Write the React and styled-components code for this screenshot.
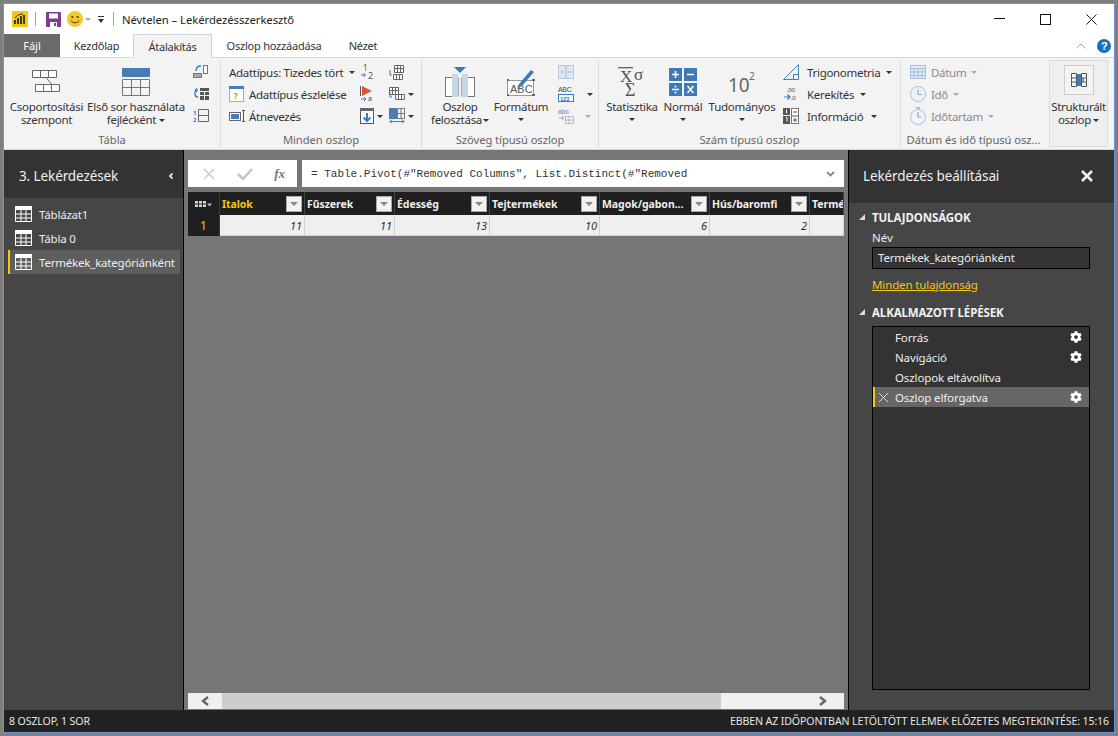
import React from 'react';
import styled, { createGlobalStyle } from 'styled-components';
import { FaCog } from 'react-icons/fa';

const Global = createGlobalStyle`
  html, body { margin: 0; padding: 0; width: 1118px; height: 736px; overflow: hidden; background: #7f7f7f; }
  * { box-sizing: border-box; }
  body { font-family: "Noto Sans", "Open Sans", sans-serif; }
`;

const Screen = styled.div`
  width: 1118px; height: 736px; padding: 3px 3px 3px 3px; background: #7f7f7f;
`;
const Win = styled.div`
  width: 1112px; height: 730px; border: 1px solid #6d94d0; background: #fff;
  display: flex; flex-direction: column; overflow: hidden;
`;
const TitleBar = styled.div`
  height: 30px; display: flex; align-items: center; padding-left: 8px; background: #fff; flex: none;
`;
const Sep = styled.span`
  width: 1px; height: 14px; background: #a0a0a0; margin: 0 ${p => p.$r || 10}px 0 ${p => p.$l || 6}px;
`;
const Qat = styled.span`
  display: inline-flex; align-items: center; margin-left: ${p => p.$ml || 0}px;
`;
const WinTitle = styled.span`
  font-size: 11.3px; color: #222; white-space: nowrap; letter-spacing: -0.06px;
`;
const WinControls = styled.div`
  margin-left: auto; display: flex; align-items: center;
`;
const WinBtn = styled.span`
  width: 46px; display: flex; justify-content: center; align-items: center;
`;
const TabRow = styled.div`
  height: 23px; display: flex; align-items: flex-end; flex: none; background: #fff; position: relative;
`;
const FileTab = styled.div`
  width: 56px; height: 23px; background: #6a6a6a; color: #fff; font-size: 11px;
  display: flex; align-items: center; justify-content: center;
`;
const Tab = styled.div`
  height: ${p => p.$active ? 24 : 23}px; width: ${p => p.$w}px; margin-left: ${p => p.$ml || 0}px;
  display: flex; align-items: center; justify-content: center;
  font-size: 11px; color: #333; white-space: nowrap; letter-spacing: -0.22px;
  ${p => p.$active ? `background:#f3f3f3;border:1px solid #d2d2d2;border-bottom:none;margin-bottom:-1px;z-index:1;` : ''}
`;
const TabEnd = styled.div`
  margin-left: auto; display: flex; align-items: center; height: 23px; gap: 11px; padding-right: 3px;
`;
const Ribbon = styled.div`
  height: 93px; background: #f3f3f3; border-top: 1px solid #d8d8d8; border-bottom: 1px solid #d6d6d6; display: flex; flex: none;
`;
const Group = styled.div`
  width: ${p => p.$w}px; flex: none; display: flex; flex-direction: column; position: relative;
  border-right: ${p => p.$last ? 'none' : '1px solid #dcdcdc'};
  margin: 2px 0 1px;
`;
const GroupBody = styled.div`
  flex: 1; display: flex; padding-left: ${p => p.$pl || 0}px; padding-top: 1px; min-height: 0;
`;
const GroupLabel = styled.div`
  height: 17px; line-height: 17px; text-align: center; font-size: 11.2px; color: #666; white-space: nowrap;
  letter-spacing: -0.05px;
`;
const Large = styled.div`
  width: ${p => p.$w}px; flex: none; display: flex; flex-direction: column; align-items: center; color: #333;
`;
const LargeIcon = styled.div`
  height: 39px; display: flex; align-items: center; justify-content: center; padding-top: 2px;
`;
const LargeText = styled.div`
  font-size: 11.5px; line-height: 13px; text-align: center; white-space: nowrap; letter-spacing: -0.28px;
`;
const Caret = styled.span`
  display: inline-block; width: 0; height: 0; vertical-align: middle;
  margin-left: ${p => p.$ml ?? 3}px;
  border-left: 3px solid transparent; border-right: 3px solid transparent;
  border-top: 3px solid ${p => p.$off ? '#aaa' : '#333'};
`;
const CaretLine = styled.div`
  height: 13px; display: flex; justify-content: center; align-items: center;
`;
const Col = styled.div`
  width: ${p => p.$w}px; flex: none; display: flex; flex-direction: column;
`;
const SmallRow = styled.div`
  height: 22px; display: flex; align-items: center; white-space: nowrap; font-size: 11.5px;
  color: ${p => p.$off ? '#8a8a8a' : '#333'}; letter-spacing: -0.3px;
`;
const RowIcon = styled.span`
  width: ${p => p.$w || 20}px; flex: none; display: inline-flex; align-items: center; margin-left: ${p => p.$ml || 0}px;
`;
const BoxedGroup = styled.div`
  width: 59px; flex: none; margin: 2px 0 2px 3px; background: #efefef; border: 1px solid #dcdcdc;
  display: flex; flex-direction: column; align-items: center; padding-top: 4px; color: #333;
`;
const BoxIcon = styled.div`
  width: 30px; height: 30px; border: 1px solid #cfcfcf; background: #f3f3f3; display: flex; align-items: center; justify-content: center;
  margin-bottom: 5px;
`;
const Main = styled.div`
  flex: 1; display: flex; min-height: 0; background: #767676;
`;
const LeftPane = styled.div`
  width: 180px; flex: none; border-right: 1px solid #000; background: #464646; display: flex; flex-direction: column;
`;
const PaneHead = styled.div`
  height: ${p => p.$h}px; background: #333; display: flex; align-items: center; justify-content: space-between;
  color: #f0f0f0; flex: none; font-size: ${p => p.$fs}px; padding: ${p => p.$pt}px ${p => p.$pr}px ${p => p.$pb}px ${p => p.$pl}px; letter-spacing: -0.1px;
`;
const QueryList = styled.div`
  padding: 4px 3px 0 4px; display: flex; flex-direction: column;
`;
const QueryRow = styled.div`
  height: 24px; display: flex; align-items: center; gap: 7px; padding-left: ${p => p.$sel ? 5 : 7}px; color: #eee; font-size: 11.5px; letter-spacing: -0.2px;
  ${p => p.$sel ? 'background:#5e5e5e;border-left:2px solid #f2c811;' : ''}
`;
const Center = styled.div`
  flex: 1; min-width: 0; display: flex; flex-direction: column; padding: 10px 4px 1px 4px; background: #767676;
`;
const FormulaBar = styled.div`
  height: 27px; display: flex; gap: 5px; flex: none;
`;
const FxBox = styled.div`
  width: 109px; background: #fff; display: flex; align-items: center; justify-content: space-between; padding: 0 12px 0 15px;
`;
const FxText = styled.span`
  font-family: "Liberation Serif", serif; font-style: italic; font-weight: 700; font-size: 13px; color: #777;
`;
const FormulaBox = styled.div`
  flex: 1; background: #fff; display: flex; align-items: center; justify-content: space-between; padding: 0 9px 0 9px;
  font-family: "Liberation Mono", monospace; font-size: 11px; color: #333; white-space: pre;
`;
const Table = styled.div`
  margin-top: 5px; overflow: hidden; flex: none;
`;
const TRow = styled.div`
  display: flex; height: ${p => p.$h}px;
`;
const RowNum = styled.div`
  width: 32px; flex: none; background: #1f1f1f; color: ${p => p.$num ? '#f2c811' : '#ccc'}; font-size: 12px; display: flex; align-items: center; justify-content: center;
  border-right: 1px solid #3a3a3a;
`;
const Th = styled.div`
  width: ${p => p.$w}px; flex: none; background: #1f1f1f; border-right: 1px solid #444;
  display: flex; align-items: center; justify-content: space-between; padding: 0 2px 0 2px;
  color: ${p => p.$first ? '#f2c811' : '#eee'}; font-weight: 700; font-size: 10.5px; white-space: nowrap; letter-spacing: -0.05px;
  overflow: hidden;
`;
const FilterBtn = styled.span`
  width: 16px; height: 16px; flex: none; background: #f2f2f2; border: 1px solid #aaa; display: flex; align-items: center; justify-content: center;
`;
const Td = styled.div`
  width: ${p => p.$w}px; flex: none; background: #efefef; border-right: 1px solid #d0d0d0; border-bottom: 1px solid #d0d0d0;
  color: #333; font-style: italic; font-size: 11px; text-align: right; padding: 3px 2px 0 0; line-height: 15px;
`;
const Spacer = styled.div` flex: 1; `;
const ScrollBar = styled.div`
  height: 16px; display: flex; align-items: center; background: #f0f0f0; flex: none;
`;
const ScrollBtn = styled.div`
  width: ${p => p.$w}px; flex: none; display: flex; justify-content: center; align-items: center;
`;
const Thumb = styled.div`
  width: 499px; height: 16px; background: #cdcdcd; flex: none;
`;
const RightPane = styled.div`
  width: 266px; flex: none; border-left: 1px solid #000; background: #464646; display: flex; flex-direction: column;
`;
const Section = styled.div`
  padding: 0 24px 0 23px; color: #eee;
`;
const SectionHead = styled.div`
  height: 18px; display: flex; align-items: center; font-weight: 700; font-size: 11.5px; color: #f0f0f0; letter-spacing: -0.12px; margin-top: ${p => p.$mt}px;
`;
const Tri = styled.span`
  width: 0; height: 0; margin-left: -13px; margin-right: 7px;
  border-style: solid; border-width: 0 0 6px 6px; border-color: transparent transparent #ddd transparent;
`;
const NameLabel = styled.div`
  font-size: 11.5px; height: 16px; line-height: 16px; margin-top: 4px;
`;
const NameInput = styled.div`
  height: 22px; margin-top: 1px; background: #333; border: 1px solid #000; color: #eee; font-size: 11.5px; padding-left: 5px; line-height: 20px; letter-spacing: -0.16px;
`;
const Link = styled.a`
  display: inline-block; margin-top: 8px; font-size: 11.5px; color: #f2c811; text-decoration: underline; letter-spacing: -0.12px; line-height: 16px;
`;
const Steps = styled.div`
  height: 364px; margin-top: 5px; background: #333; border: 1px solid #000;
`;
const Step = styled.div`
  height: 20px; display: flex; align-items: center; font-size: 11.5px; color: #eee; letter-spacing: -0.12px; padding: 0 7px 0 ${p => p.$sel ? 3 : 22}px;
  ${p => p.$sel ? 'background:#666;border-left:2px solid #f2c811;' : ''}
`;
const StepX = styled.span`
  width: 17px; display: inline-flex; flex: none;
`;
const StepGear = styled.span`
  margin-left: auto; display: inline-flex;
`;
const StatusBar = styled.div`
  height: 22px; flex: none; background: #212121; color: #e6e6e6; font-size: 10.6px; display: flex; align-items: center; justify-content: space-between; padding: 0 5px 0 5px; letter-spacing: -0.12px;
`;

const W = ({ w, h, children }) => <svg width={w} height={h} viewBox={`0 0 ${w} ${h}`} fill="none" style={{ display: 'block', flex: 'none', overflow: 'visible' }}>{children}</svg>;

const Logo = () => <W w={16} h={16}><rect width="16" height="16" fill="#f2c811" /><path d="M2 9v4h2V9zM5 7v6h2V7zM8 5v8h2V5zM11 4v9h2V4z" fill="#3a3a3a" /><path d="M3 7c2-3 5-4 8-4" stroke="#3a3a3a" /></W>;
const Save = () => <W w={15} h={15}><rect width="15" height="15" rx="1" fill="#7b3d93" /><rect x="3" y="1.5" width="9" height="5" fill="#fff" /><rect x="4" y="10" width="7" height="5" fill="#fff" /><rect x="8" y="11" width="2" height="3" fill="#7b3d93" /></W>;
const Smile = () => <W w={16} h={16}><circle cx="8" cy="8" r="8" fill="#f4c72b" /><circle cx="5.3" cy="6" r="1.1" fill="#3a3a3a" /><circle cx="10.7" cy="6" r="1.1" fill="#3a3a3a" /><path d="M4 9.5c1.5 3 6.5 3 8 0" stroke="#3a3a3a" /></W>;
const QatMenu = () => <W w={8} h={9}><path d="M1 1.5h6" stroke="#333" /><path d="M1 4l3 4 3-4z" fill="#333" /></W>;
const GroupBy = () => <W w={30} h={24}><g stroke="#666" fill="#fff"><path d="M.5.5h8v7h-8zM8.5.5h8v7h-8zM16.5.5h8v7h-8zM3.5 14.5h8v7h-8zM11.5 14.5h8v7h-8zM19.5 14.5h8v7h-8z" /><path d="M14 7.5l6 7" /></g></W>;
const FirstRow = () => <W w={28} h={28}><rect width="28" height="9" fill="#4a7db5" /><g stroke="#777"><path d="M.5 11.5h27v16H.5zM.5 19.5h27M9.5 11.5v16M18.5 11.5v16" /></g></W>;
const Sm1 = () => <W w={16} h={14}><rect x="10.5" y=".5" width="4" height="8" fill="#fff" stroke="#777" /><rect x=".5" y="8.5" width="8" height="4" fill="#aaa" stroke="#777" /><path d="M3 6c0-3 2-5 5-5" stroke="#2f7cc4" strokeWidth="1.4" /></W>;
const Sm2 = () => <W w={16} h={14}><path d="M7 1h9v3H7zM7 5h4v3H7zM12 5h4v3h-4zM7 9h4v4H7zM12 9h4v4h-4z" fill="#555" /><path d="M5 3C1 3 1 10 5 10" stroke="#2f7cc4" strokeWidth="1.4" /><path d="M4 1l-2 2 2 2" stroke="#2f7cc4" /></W>;
const Sm3 = () => <W w={16} h={14}><path d="M5.5.5h10v12h-10zM5.5 6.5h10" stroke="#666" /><text x="0" y="6" fontSize="6" fill="#2f7cc4" fontWeight="700">1</text><text x="0" y="13" fontSize="6" fill="#2f7cc4" fontWeight="700">2</text></W>;
const Detect = () => <W w={15} h={16}><rect x=".5" y=".5" width="14" height="15" fill="#fff" stroke="#aaa" /><rect width="15" height="3" fill="#4a7db5" /><text x="4.5" y="13" fontSize="9" fill="#c79a2a" fontWeight="700">?</text></W>;
const Rename = () => <W w={17} h={14}><rect x=".5" y="3.5" width="11" height="8" fill="#fff" stroke="#666" /><rect x="2" y="5" width="8" height="5" fill="#4a7db5" /><path d="M13 1.5h3M14.5 1.5v11M13 12.5h3" stroke="#555" /></W>;
const Num12 = () => <W w={16} h={16}><text x="3" y="7" fontSize="8" fill="#555">1</text><text x="8" y="15" fontSize="9" fill="#555">2</text><path d="M1 11h4M3.5 9l2 2-2 2" stroke="#2f7cc4" /></W>;
const Flag = () => <W w={17} h={16}><path d="M.5 0v10" stroke="#555" /><path d="M2 0l10 5-10 5z" fill="#d9513b" /><text x="8" y="15" fontSize="7" fill="#444">a</text><path d="M1 13h5M4 11l2 2-2 2" stroke="#2f7cc4" /></W>;
const Fill = () => <W w={14} h={16}><rect x=".5" y=".5" width="13" height="15" fill="#fff" stroke="#555" /><rect width="14" height="3" fill="#666" /><path d="M7 5v8M3.5 9.5L7 13l3.5-3.5" stroke="#2f7cc4" strokeWidth="2" /></W>;
const GridArrow = ({ flip }) => <W w={16} h={15}><g stroke="#666" fill="#fff" transform={flip ? 'translate(0 0)' : 'translate(5 0)'}><path d="M.5.5h9v7h-9zM.5 3.5h9M3.5.5v7M6.5.5v7" /></g><g stroke="#666" fill="#fff" transform={flip ? 'translate(6 7)' : 'translate(4 9)'}><path d="M.5.5h9v5h-9zM3.5.5v5M6.5.5v5" /></g><path d="M1 5v5h2" stroke="#2f7cc4" /></W>;
const Widen = () => <W w={16} h={16}><rect x=".5" y=".5" width="7" height="10" fill="#4a7db5" stroke="#4a7db5" /><path d="M8.5.5h7v10h-7zM12 .5v10M.5 5.5h15M4 .5v10" stroke="#777" /><path d="M1 13.5h14M3 11.5l-2 2 2 2M13 11.5l2 2-2 2" stroke="#2f7cc4" /></W>;
const Split = () => <W w={30} h={30}><path d="M9 0h12l-6 6z" fill="#3f7ab8" /><rect x=".5" y="10.5" width="7" height="19" fill="#fff" stroke="#777" /><rect x="22.500" y="10.5" width="7" height="19" fill="#fff" stroke="#777" /><rect x="7" y="7" width="6" height="23" fill="#c5d8ea" /><rect x="17" y="7" width="6" height="23" fill="#c5d8ea" /><path d="M13.500 10.500v19M16.500 10.500v19" stroke="#aaa" /></W>;
const Format = () => <W w={30} h={30}><rect x="1.5" y="13.5" width="26" height="15" fill="#fff" stroke="#999" /><path d="M1 13h2M26 13h3M1 28h2M26 28h3" stroke="#666" strokeWidth="2" /><text x="4" y="26" fontSize="11" fill="#555" fontFamily="Liberation Sans">ABC</text><path d="M11 22l2-5L25 3l3 2-12 14z" fill="#3f7ab8" /></W>;
const MergeOff = () => <W w={16} h={14}><rect x=".5" y=".5" width="15" height="13" fill="#dfe6ee" stroke="#b6c8dc" /><path d="M3 7h3M13 7h-3M8 1v12" stroke="#9db7d3" /></W>;
const Abc123 = () => <W w={16} h={16}><text x="0" y="6" fontSize="7" fill="#444" fontFamily="Liberation Sans">ABC</text><rect x=".5" y="8.5" width="15" height="7" fill="#fff" stroke="#2f7cc4" /><text x="2" y="14.5" fontSize="6" fontWeight="700" fill="#2f7cc4" fontFamily="Liberation Sans">123</text></W>;
const AbcOff = () => <W w={16} h={16}><text x="0" y="6" fontSize="7" fill="#8ba9c6" fontFamily="Liberation Sans" fontWeight="700">abc</text><path d="M1 10h5M4 8l2 2-2 2" stroke="#8ba9c6" /><path d="M7.5 8.5h8v7h-8zM7.5 12h8M11 8.5v7" stroke="#bbb" /></W>;
const Stats = () => <W w={28} h={30}><path d="M0 .7h15" stroke="#555" strokeWidth="1.2" /><text x="2" y="15" fontSize="17" fill="#555" fontFamily="Liberation Serif">X</text><text x="16" y="13" fontSize="17" fill="#555" fontFamily="Liberation Serif">σ</text><text x="7" y="29" fontSize="18" fill="#555" fontFamily="Liberation Serif">Σ</text></W>;
const Std = () => <W w={28} h={28}><rect width="13" height="13" fill="#3f7ab8" /><rect x="15" width="13" height="13" fill="#3f7ab8" /><rect y="15" width="13" height="13" fill="#3f7ab8" /><rect x="15" y="15" width="13" height="13" fill="#3f7ab8" /><path d="M3 6.5h7M6.5 3v7M18 6.5h7M3 21.5h7M18.5 18l6 7M24.5 18l-6 7" stroke="#fff" strokeWidth="1.6" /><circle cx="6.5" cy="18.5" r="1" fill="#fff" /><circle cx="6.5" cy="24.500" r="1" fill="#fff" /></W>;
const Sci = () => <W w={28} h={24}><text x="0" y="22" fontSize="19" fill="#666" fontFamily="Noto Sans">10</text><text x="21" y="10" fontSize="10" fill="#666" fontFamily="Noto Sans">2</text></W>;
const Trig = () => <W w={16} h={16}><path d="M.5 15.5L15.5 .5v15z" stroke="#4a7db5" /><path d="M10.5 15.5v-5h5" stroke="#4a7db5" /></W>;
const Round = () => <W w={16} h={16}><text x="4" y="6" fontSize="6" fill="#444">.00</text><text x="8" y="14" fontSize="6" fill="#444">.0</text><path d="M1 11h6M4.5 8.500L7 11l-2.500 2.500" stroke="#2f7cc4" strokeWidth="1.2" /></W>;
const Info = () => <W w={16} h={16}><rect width="7" height="7" fill="#555" /><rect y="8" width="7" height="8" fill="#555" /><rect x="8.5" y=".5" width="7" height="15" fill="#fff" stroke="#777" /><path d="M10 4h4M8.500 8h7M12 10v4M10 12h4" stroke="#555" /><path d="M3.500 1.500v4M3 9.500h1v4" stroke="#fff" /></W>;
const DateI = () => <W w={16} h={14}><rect x=".5" y=".5" width="15" height="13" fill="#e3ebf3" stroke="#a9c0dc" /><path d="M.5 3.500h15M4 3.500v10M8 3.500v10M12 3.500v10M.5 7h15M.5 10.500h15" stroke="#a9c0dc" /></W>;
const Clock = () => <W w={16} h={16}><circle cx="8" cy="8" r="7.5" fill="#eef3f8" stroke="#a9c0dc" /><path d="M8 3.500V8.500h4" stroke="#8aa9cc" strokeWidth="1.2" /></W>;
const Timer = () => <W w={16} h={18}><circle cx="8" cy="10" r="7.5" fill="#eef3f8" stroke="#a9c0dc" /><path d="M8 5v5h3.500M6 .8h4" stroke="#8aa9cc" strokeWidth="1.2" /></W>;
const Struct = () => <W w={16} h={14}><path d="M.5.5h5v13h-5zM.5 5h5M.5 9h5M10.500.5h5v13h-5zM10.500 5h5M10.500 9h5" stroke="#555" /><rect x="6" y="1" width="4" height="12" fill="#3f7ab8" /><path d="M7 7h6M11 5l2 2-2 2" stroke="#3f7ab8" /></W>;
const TableIcon = () => <W w={17} h={16}><path d="M.5.5h16v15H.5z" stroke="#fff" /><rect width="17" height="4" fill="#fff" /><path d="M.5 8h16M.5 12h16M6 4v11M11 4v11" stroke="#fff" /></W>;
const XI = ({ s = 12, c = '#bbb', w = 2 }) => <W w={s} h={s}><path d={`M1 1L${s - 1} ${s - 1}M${s - 1} 1L1 ${s - 1}`} stroke={c} strokeWidth={w} /></W>;
const Check = () => <W w={16} h={12}><path d="M1 6l5 5L15 1" stroke="#c4c4c4" strokeWidth="2.5" /></W>;
const Filt = () => <W w={8} h={4}><path d="M0 0h8L4 4z" fill="#888" /></W>;
const GridTiny = () => <W w={17} h={8}><path d="M0 1h11v6H0z" fill="#cbd8ea" /><path d="M3.500 1v6M7.500 1v6M0 4h11" stroke="#222" /><path d="M12 3.500h5l-2.500 3z" fill="#bbb" /></W>;
const Chev = ({ d, c = '#666', s = 2.4 }) => <W w={11} h={12}><path d={d} stroke={c} strokeWidth={s} /></W>;

const cols = [
  { w: 85, t: 'Italok', v: '11', first: true },
  { w: 90, t: 'Fűszerek', v: '11' },
  { w: 95, t: 'Édesség', v: '13' },
  { w: 110, t: 'Tejtermékek', v: '10' },
  { w: 110, t: 'Magok/gabon...', v: '6' },
  { w: 100, t: 'Hús/baromfi', v: '2' },
  { w: 34, t: 'Termékek', v: '', clip: true },
];

export default function App() {
  return (
    <Screen>
      <Global />
      <Win>
        <TitleBar>
          <Logo />
          <Sep $l={7} $r={10} />
          <Save />
          <Qat $ml={6}><Smile /></Qat>
          <Caret $ml={2} $off />
          <Qat $ml={6}><QatMenu /></Qat>
          <Sep $l={8} $r={8} />
          <WinTitle>Névtelen – Lekérdezésszerkesztő</WinTitle>
          <WinControls>
            <WinBtn><W w={11} h={2}><path d="M0 .5h11" stroke="#111" /></W></WinBtn>
            <WinBtn><W w={11} h={11}><rect x=".5" y=".5" width="10" height="10" stroke="#111" /></W></WinBtn>
            <WinBtn><W w={11} h={11}><path d="M.5.5l10 10M10.500.5l-10 10" stroke="#111" /></W></WinBtn>
          </WinControls>
        </TitleBar>
        <TabRow>
          <FileTab>Fájl</FileTab>
          <Tab $w={73}>Kezdőlap</Tab>
          <Tab $w={79} $active>Átalakítás</Tab>
          <Tab $w={124}>Oszlop hozzáadása</Tab>
          <Tab $w={54}>Nézet</Tab>
          <TabEnd>
            <W w={10} h={6}><path d="M.5 5.500L5 1l4.500 4.500" stroke="#aaa" /></W>
            <W w={14} h={14}><circle cx="7" cy="7" r="7" fill="#1470c4" /><text x="4" y="11" fontSize="11" fontWeight="700" fill="#fff" fontFamily="Liberation Sans">?</text></W>
          </TabEnd>
        </TabRow>
        <Ribbon>
          <Group $w={217}>
            <GroupBody $pl={3}>
              <Large $w={79}>
                <LargeIcon><GroupBy /></LargeIcon>
                <LargeText>Csoportosítási<br />szempont</LargeText>
              </Large>
              <Large $w={100}>
                <LargeIcon><FirstRow /></LargeIcon>
                <LargeText>Első sor használata<br />fejlécként<Caret /></LargeText>
              </Large>
              <Col $w={26}>
                <SmallRow><RowIcon $w={16} $ml={7}><Sm1 /></RowIcon></SmallRow>
                <SmallRow><RowIcon $w={16} $ml={7}><Sm2 /></RowIcon></SmallRow>
                <SmallRow><RowIcon $w={16} $ml={7}><Sm3 /></RowIcon></SmallRow>
              </Col>
            </GroupBody>
            <GroupLabel>Tábla</GroupLabel>
          </Group>
          <Group $w={201}>
            <GroupBody $pl={8}>
              <Col $w={131}>
                <SmallRow>Adattípus: Tizedes tört<Caret $ml={6} /></SmallRow>
                <SmallRow><RowIcon><Detect /></RowIcon>Adattípus észlelése</SmallRow>
                <SmallRow><RowIcon><Rename /></RowIcon>Átnevezés</SmallRow>
              </Col>
              <Col $w={29}>
                <SmallRow><Num12 /></SmallRow>
                <SmallRow><Flag /></SmallRow>
                <SmallRow><Fill /><Caret /></SmallRow>
              </Col>
              <Col $w={30}>
                <SmallRow><GridArrow /></SmallRow>
                <SmallRow><GridArrow flip /><Caret /></SmallRow>
                <SmallRow><Widen /><Caret /></SmallRow>
              </Col>
            </GroupBody>
            <GroupLabel>Minden oszlop</GroupLabel>
          </Group>
          <Group $w={177}>
            <GroupBody $pl={9}>
              <Large $w={58}>
                <LargeIcon><Split /></LargeIcon>
                <LargeText>Oszlop<br />felosztása<Caret $ml={1} /></LargeText>
              </Large>
              <Large $w={64}>
                <LargeIcon><Format /></LargeIcon>
                <LargeText>Formátum</LargeText>
                <CaretLine><Caret $ml={0} /></CaretLine>
              </Large>
              <Col $w={44}>
                <SmallRow><RowIcon $ml={5}><MergeOff /></RowIcon></SmallRow>
                <SmallRow><RowIcon $ml={5}><Abc123 /></RowIcon><Caret $ml={9} /></SmallRow>
                <SmallRow><RowIcon $ml={5}><AbcOff /></RowIcon><Caret $ml={7} $off /></SmallRow>
              </Col>
            </GroupBody>
            <GroupLabel>Szöveg típusú oszlop</GroupLabel>
          </Group>
          <Group $w={302}>
            <GroupBody>
              <Large $w={66}>
                <LargeIcon><Stats /></LargeIcon>
                <LargeText>Statisztika</LargeText>
                <CaretLine><Caret $ml={0} /></CaretLine>
              </Large>
              <Large $w={36}>
                <LargeIcon><Std /></LargeIcon>
                <LargeText>Normál</LargeText>
                <CaretLine><Caret $ml={0} /></CaretLine>
              </Large>
              <Large $w={82}>
                <LargeIcon><Sci /></LargeIcon>
                <LargeText>Tudományos</LargeText>
                <CaretLine><Caret $ml={0} /></CaretLine>
              </Large>
              <Col $w={115}>
                <SmallRow><RowIcon $w={24}><Trig /></RowIcon>Trigonometria<Caret $ml={6} /></SmallRow>
                <SmallRow><RowIcon $w={24}><Round /></RowIcon>Kerekítés<Caret $ml={6} /></SmallRow>
                <SmallRow><RowIcon $w={24}><Info /></RowIcon>Információ<Caret $ml={8} /></SmallRow>
              </Col>
            </GroupBody>
            <GroupLabel>Szám típusú oszlop</GroupLabel>
          </Group>
          <Group $w={145} $last>
            <GroupBody $pl={9}>
              <Col $w={130}>
                <SmallRow $off><RowIcon $w={21}><DateI /></RowIcon>Dátum<Caret $ml={5} $off /></SmallRow>
                <SmallRow $off><RowIcon $w={21}><Clock /></RowIcon>Idő<Caret $ml={5} $off /></SmallRow>
                <SmallRow $off><RowIcon $w={21}><Timer /></RowIcon>Időtartam<Caret $ml={5} $off /></SmallRow>
              </Col>
            </GroupBody>
            <GroupLabel>Dátum és idő típusú osz...</GroupLabel>
          </Group>
          <BoxedGroup>
            <BoxIcon><Struct /></BoxIcon>
            <LargeText>Strukturált<br />oszlop<Caret $ml={2} /></LargeText>
          </BoxedGroup>
        </Ribbon>
        <Main>
          <LeftPane>
            <PaneHead $h={48} $fs={13.500} $pl={15} $pr={7} $pt={3} $pb={0}>3. Lekérdezések<Chev d="M7.500 3.500L5 6l2.500 2.500" c="#ddd" s={1.8} /></PaneHead>
            <QueryList>
              <QueryRow><TableIcon />Táblázat1</QueryRow>
              <QueryRow><TableIcon />Tábla 0</QueryRow>
              <QueryRow $sel><TableIcon />Termékek_kategóriánként</QueryRow>
            </QueryList>
          </LeftPane>
          <Center>
            <FormulaBar>
              <FxBox><XI c="#ccc" w={1.6} /><Check /><FxText>fx</FxText></FxBox>
              <FormulaBox>{'= Table.Pivot(#"Removed Columns", List.Distinct(#"Removed'}<W w={9} h={6}><path d="M1 1l3.500 3.500L8 1" stroke="#888" strokeWidth="1.800" /></W></FormulaBox>
            </FormulaBar>
            <Table>
              <TRow $h={23}>
                <RowNum><GridTiny /></RowNum>
                {cols.map(c => <Th key={c.t} $w={c.w} $first={c.first}>{c.t}{!c.clip && <FilterBtn><Filt /></FilterBtn>}</Th>)}
              </TRow>
              <TRow $h={21}>
                <RowNum $num>1</RowNum>
                {cols.map(c => <Td key={c.t} $w={c.w}>{c.v}</Td>)}
              </TRow>
            </Table>
            <Spacer />
            <ScrollBar>
              <ScrollBtn $w={34}><Chev d="M8 2L3 6l5 4" /></ScrollBtn>
              <Thumb />
              <Spacer />
              <ScrollBtn $w={44}><Chev d="M3 2l5 4-5 4" /></ScrollBtn>
            </ScrollBar>
          </Center>
          <RightPane>
            <PaneHead $h={53} $fs={13.500} $pl={14} $pr={21} $pt={0} $pb={1}>Lekérdezés beállításai<XI c="#eee" w={2.600} /></PaneHead>
            <Section>
              <SectionHead $mt={5}><Tri />TULAJDONSÁGOK</SectionHead>
              <NameLabel>Név</NameLabel>
              <NameInput>Termékek_kategóriánként</NameInput>
              <Link>Minden tulajdonság</Link>
              <SectionHead $mt={9}><Tri />ALKALMAZOTT LÉPÉSEK</SectionHead>
              <Steps>
                <Step>Forrás<StepGear><FaCog size={12} color="#fff" /></StepGear></Step>
                <Step>Navigáció<StepGear><FaCog size={12} color="#fff" /></StepGear></Step>
                <Step>Oszlopok eltávolítva</Step>
                <Step $sel><StepX><XI s={11} c="#ddd" w={1} /></StepX>Oszlop elforgatva<StepGear><FaCog size={12} color="#fff" /></StepGear></Step>
              </Steps>
            </Section>
          </RightPane>
        </Main>
        <StatusBar>
          <span>8 OSZLOP, 1 SOR</span>
          <span>EBBEN AZ IDŐPONTBAN LETÖLTÖTT ELEMEK ELŐZETES MEGTEKINTÉSE: 15:16</span>
        </StatusBar>
      </Win>
    </Screen>
  );
}
